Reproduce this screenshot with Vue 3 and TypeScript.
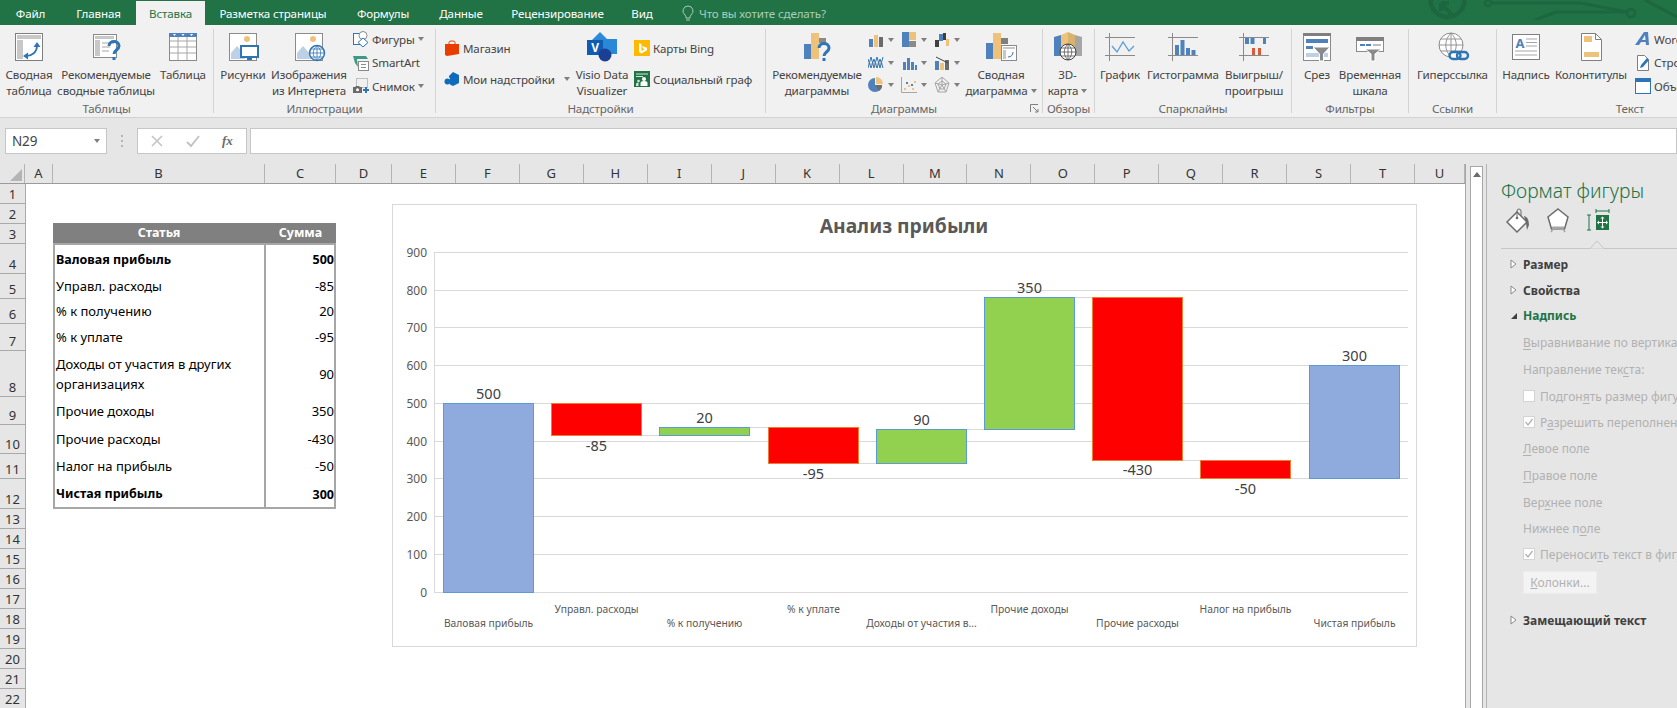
<script setup lang="ts">
type Big = { t: "big"; w: number; icon: string; lines: string[]; caret?: boolean };
type Small = { t: "small"; w: number; pad: number; two?: boolean; rows: { icon: string; text: string; caret?: boolean }[] };
type Mini = { t: "mini"; w: number; icons: string[] };
type Item = Big | Small | Mini;
type Group = { name: string; w: number; items: Item[]; launcher?: boolean };

const tabs = [
  { name: "Файл", w: 61 },
  { name: "Главная", w: 75 },
  { name: "Вставка", w: 69, active: true },
  { name: "Разметка страницы", w: 136 },
  { name: "Формулы", w: 84 },
  { name: "Данные", w: 72 },
  { name: "Рецензирование", w: 121 },
  { name: "Вид", w: 48 },
];

const grid = '<path d="M4 9h26M4 15h26M4 21h26M12 5v23M21 5v23" stroke="#a6a6a6" fill="none"/>';
const frame = '<path d="M2 5.5h30M2 23.5h30M6.5 1v28" stroke="#8a8a8a" fill="none"/>';
const landscape =
  '<rect x="3.5" y="1.5" width="27" height="27" fill="#fff" stroke="#8a8a8a"/><circle cx="21" cy="7" r="3" fill="#eec27a"/><path d="M5 27v-6l6-7 8 9v4z" fill="#bcd0e6"/>';
const funnel = '<path d="M13 15h17l-6.5 7v7h-4v-7z" fill="#8a8a8a" stroke="#fff"/>';

const icons: Record<string, string> = {
  pivot:
    '<rect x="3.5" y="1.5" width="27" height="27" fill="#fff" stroke="#7f7f7f"/><rect x="5" y="3" width="24" height="4" fill="#c8c8c8"/><rect x="5" y="8" width="6" height="19" fill="#c8c8c8"/><path d="M14 24c6 0 11-4 11-10" fill="none" stroke="#2e75b6" stroke-width="1.8"/><path d="M25 10l-3.5 5h7zM11 24l5-3.5v7z" fill="#2e75b6"/>',
  recpivot:
    '<rect x="4.5" y="2.5" width="23" height="23" fill="#fff" stroke="#8a8a8a"/><path d="M6 4h19v3H6zM6 8h5v16H6z" fill="#c8c8c8"/><path d="M13 11h12M13 15h8M13 19h7" stroke="#a6a6a6"/><path d="M20 14c0-6 10-6 10 0 0 4-5 4-5 8" fill="none" stroke="#2e75b6" stroke-width="3"/><rect x="23.5" y="25" width="3" height="3" fill="#2e75b6"/>',
  table:
    '<rect x="3.5" y="1.5" width="27" height="27" fill="#fff" stroke="#8a8a8a"/><rect x="3" y="1" width="28" height="4" fill="#4f81bd"/><path d="M7 2h3l-1.500 2zM15.500 2h3l-1.500 2zM24 2h3l-1.500 2z" fill="#fff"/>' + grid,
  pictures:
    landscape + '<rect x="15" y="14" width="17" height="11" fill="#fff" stroke="#2e75b6" stroke-width="2"/><path d="M21 26h5v2h-5z" fill="#2e75b6"/>',
  online:
    landscape + '<circle cx="25" cy="21" r="7.500" fill="#fff" stroke="#2e75b6" stroke-width="1.500"/><path d="M17.500 21h15M18.500 17h13M18.500 25h13M25 13.500v15M25 13.500c-5 5-5 10 0 15M25 13.500c5 5 5 10 0 15" fill="none" stroke="#2e75b6" stroke-width=".8"/>',
  visio:
    '<path d="M15 0l8 8h-16z" fill="#2e8ad8"/><rect x="11" y="7" width="21" height="15" fill="#2b88d8"/><rect x="2" y="8" width="16" height="15" fill="#0f5cb5"/><circle cx="20" cy="23" r="6.500" fill="#1a3f95"/><text x="10" y="20" font-size="12" font-weight="700" fill="#fff" text-anchor="middle" font-family="Noto Sans, sans-serif">V</text>',
  recchart:
    '<rect x="4" y="12" width="7" height="15" fill="#4f81bd"/><rect x="11" y="1" width="8" height="26" fill="#eec27a"/><rect x="19" y="6" width="7" height="5" fill="#8a8a8a"/><path d="M19 16c0-6 10-6 10 0 0 4-5 4-5 8" fill="none" stroke="#2e75b6" stroke-width="3"/><rect x="22.500" y="26" width="3" height="3" fill="#2e75b6"/>',
  pivotchart:
    '<rect x="2" y="11" width="7" height="16" fill="#4f81bd"/><rect x="9" y="1" width="8" height="26" fill="#eec27a"/><rect x="17" y="6" width="7" height="6" fill="#7f7f7f"/><rect x="17.500" y="13.500" width="15" height="15" fill="#fff" stroke="#8a8a8a"/><path d="M19 15h12v2H19zM19 18h3v9h-3z" fill="#c8c8c8"/><path d="M24 25c3 0 5-2 5-5" fill="none" stroke="#2e75b6"/>',
  map3d:
    '<path d="M3 5l7-2v21H3z" fill="#4f81bd"/><path d="M10 3l7-3 0 18H10z" fill="#eec27a"/><path d="M17 0l7 3v16h-7z" fill="#d8b36e"/><path d="M24 3l7 2v19h-7z" fill="#a6a6a6"/><circle cx="17" cy="20" r="8" fill="#fff" stroke="#404040"/><path d="M9 20h16M10 16h14M10 24h14M17 12v16M17 12c-5 5-5 11 0 16M17 12c5 5 5 11 0 16" fill="none" stroke="#404040" stroke-width=".7"/>',
  sparkline: frame + '<path d="M9 14l5 6 6-10 6 9 5-5" fill="none" stroke="#5b9bd5" stroke-width="1.300"/>',
  sparkcol: frame + '<path d="M9 13h4v10H9zM14.500 8h4v15h-4zM20 16h4v7h-4zM25.500 18h4v5h-4z" fill="#4f81bd"/>',
  sparkwin: frame + '<path d="M8 6h4v6H8zM13.500 6h4v6h-4zM26 6h3v6h-3z" fill="#4f81bd"/><path d="M15 16h3v7h-3zM21 16h3v7h-3z" fill="#d9593b"/>',
  slicer:
    '<rect x="3.500" y="1.500" width="27" height="27" fill="#fff" stroke="#8a8a8a"/><rect x="3" y="1" width="28" height="3" fill="#7f7f7f"/><path d="M6 7h22v4H6zM6 14h7v3H6z" fill="#4f81bd"/><rect x="6" y="21" width="22" height="4" fill="#bcd0e6"/>' + funnel,
  timeline:
    '<rect x="3.500" y="5.500" width="27" height="14" fill="#fff" stroke="#8a8a8a"/><rect x="3" y="5" width="28" height="4" fill="#7f7f7f"/><path d="M7 12h5v2H7zM13 12h5v2h-5z" fill="#4f81bd"/><path d="M20 12h8v2h-8z" fill="#bdbdbd"/><path d="M12 17h16l-6 5v7h-4v-7z" fill="#8a8a8a" stroke="#fff"/>',
  hyperlink:
    '<circle cx="15" cy="13" r="12" fill="#fff" stroke="#8a8a8a"/><path d="M3 13h24M5 7h20M5 19h20M15 1v24M15 1c-7 7-7 17 0 24M15 1c7 7 7 17 0 24" fill="none" stroke="#8a8a8a" stroke-width=".9"/><rect x="13.500" y="20" width="11" height="7" rx="3.500" fill="#fff" stroke="#2e75b6" stroke-width="2.400"/><rect x="21" y="20" width="11" height="7" rx="3.500" fill="none" stroke="#2e75b6" stroke-width="2.400"/>',
  textbox:
    '<rect x="3.500" y="2.500" width="27" height="25" fill="#fff" stroke="#7f7f7f"/><text x="11" y="16" font-size="13" font-weight="700" fill="#4f81bd" text-anchor="middle" font-family="Noto Sans, sans-serif">A</text><path d="M17 7h11M17 10.500h11M17 14h11M6 19h22M6 23h22" stroke="#a6a6a6"/>',
  header:
    '<path d="M7.500 1.500h14l6 6v21h-20z" fill="#fff" stroke="#7f7f7f"/><path d="M21.500 1.500v6h6" fill="none" stroke="#7f7f7f"/><rect x="10" y="4" width="8" height="6" fill="#eec27a"/><rect x="10" y="20" width="15" height="5" fill="#eec27a"/>',
  shapes:
    '<rect x=".5" y="2.500" width="11" height="11" fill="#fff" stroke="#2e75b6"/><circle cx="10" cy="4.500" r="4" fill="#fff" stroke="#8a8a8a"/><path d="M10 7l5 4.500-5 4.500-5-4.500z" fill="#fff" stroke="#2e75b6"/>',
  smartart:
    '<path d="M0 1h13l2 3H4l1 8-3-4z" fill="#3e9a86"/><rect x="5.500" y="6.500" width="10" height="9" fill="#fff" stroke="#8a8a8a"/><path d="M8 9.500h5M8 12.500h5" stroke="#8a8a8a"/>',
  screenshot:
    '<rect x="3.500" y=".5" width="11" height="9" fill="none" stroke="#8a8a8a" stroke-dasharray="1 1"/><path d="M0 9h2l1-1h3l1 1h2v6H0z" fill="#6b6b6b"/><circle cx="4.500" cy="11.800" r="1.500" fill="#fff"/><path d="M10 12h6M13 9v6" stroke="#2e75b6" stroke-width="2"/>',
  store:
    '<path d="M1 4h14v10l-12 2-2-1z" fill="#eb3c00"/><path d="M5 5V2.500Q5 1 7 1h2q2 0 2 1.500V5" fill="none" stroke="#eb3c00"/>',
  addins:
    '<path d="M9 1l6 3v8l-6 3-3-1.500V7L5 6.500V5z" fill="#0f6cbd"/><circle cx="3.500" cy="10.500" r="3" fill="#0f6cbd"/>',
  bing:
    '<rect width="16" height="16" fill="#ffb900"/><path d="M5 3l2.500 1v7l3-1.800-1.500-.7-1-2.500 5 1.800v2.400L7.500 13.500 5 12z" fill="#fff"/>',
  people:
    '<rect width="16" height="16" fill="#217346"/><path d="M2 3h12M2 5.500h7" stroke="#cfe5d8"/><circle cx="10" cy="8" r="2" fill="#fff"/><path d="M6.500 15v-3q0-2 3.500-2t3.500 2v3z" fill="#fff"/><circle cx="4.500" cy="10" r="1.300" fill="#cfe5d8"/><path d="M2 15v-2q0-1.500 2.500-1.500v3.500z" fill="#cfe5d8"/>',
  wordart:
    '<path d="M0 14L9 1h4l1 13h-3l-.300-3H6l-2 3zM7 9h3.500L10 4z" fill="#4f81bd"/>',
  signature:
    '<path d="M2.500 .5h7l4 4v11h-11z" fill="#fff" stroke="#7f7f7f"/><path d="M5 13l1-3 6-7 2 2-6 7z" fill="#2e75b6"/>',
  object:
    '<rect x=".5" y=".5" width="15" height="15" fill="#fff" stroke="#2e75b6"/><rect y="0" width="16" height="4" fill="#2e75b6"/>',
  mColumn: '<path d="M1 7h4v8H1z" fill="#4f81bd"/><path d="M6 3h4v12H6z" fill="#eec27a"/><path d="M11 5h4v10h-4z" fill="#6b6b6b"/>',
  mTree: '<path d="M1 0h7v15H1z" fill="#4f81bd"/><path d="M8 0h7v8H8z" fill="#eec27a"/><path d="M8 9h7v6H8z" fill="#8a8a8a"/>',
  mWater: '<path d="M1 8h4v7H1z" fill="#404040"/><path d="M5 2h4v7H5z" fill="#4f81bd"/><path d="M9 1h3v7H9z" fill="#404040"/><path d="M12 7h3v7h-3z" fill="#eec27a"/>',
  mLine: '<path d="M0 13l3-11 3 11 3-11 3 11 3-11M0 4l3 9 3-9 3 9 3-9 3 9" fill="none" stroke="#2e75b6"/><path d="M0 9h15" stroke="#8a8a8a"/>',
  mStat: '<path d="M2 7h3v8H2zM6 3h3v12H6zM10 7h3v8h-3zM14 10h2v5h-2z" fill="#4f81bd"/>',
  mCombo: '<path d="M1 6h4v9H1z" fill="#4f81bd"/><path d="M6 8h4v7H6z" fill="#eec27a"/><path d="M11 5h4v10h-4z" fill="#6b6b6b"/><path d="M2 2l6 3 6 3" fill="none" stroke="#404040"/>',
  mPie: '<path d="M7 1a7 7 0 1 0 7 7H7z" fill="#4f81bd"/><path d="M8 0v7h7a7 7 0 0 0-7-7z" fill="#eec27a"/><path d="M7 8h7a7 7 0 0 1-3 6z" fill="#6b6b6b"/>',
  mScatter: '<path d="M.5 0v15.500H16" fill="none" stroke="#a6a6a6"/><path d="M3 11h2v2H3zM7 8h2v2H7zM11 11h2v2h-2zM13 4h2v2h-2z" fill="#eec27a"/><path d="M5 5h2v2H5zM10 7h2v2h-2z" fill="#4f81bd"/>',
  mRadar: '<path d="M8 0l7 6-3 9H4L1 6z" fill="none" stroke="#a6a6a6"/><path d="M8 0v8M15 6L8 8M12 15L8 8M4 15l4-7M1 6l7 2M8 4l4 3-2 5H6L4 7z" fill="none" stroke="#a6a6a6"/>',
  bucket:
    '<path d="M2 14L12 4l10 10-10 10z" fill="#fff" stroke="#6b6b6b" stroke-width="1.500"/><path d="M12 10V3q0-2 2-2t2 2v5" fill="none" stroke="#6b6b6b"/><circle cx="12" cy="10" r="1.300" fill="#6b6b6b"/><path d="M19 8q5 1 5 9l-2 5-1-7z" fill="#6b6b6b"/>',
  pentagon:
    '<path d="M12 1l10 8-3.500 12h-13L2 9z" fill="#fff" stroke="#6b6b6b" stroke-width="1.500"/><path d="M5 24l2-3h10l2 3" fill="none" stroke="#a6a6a6" stroke-width="1.500"/><path d="M6 19.500h12" stroke="#a6a6a6" stroke-width="2"/>',
  size:
    '<rect x="9" y="7" width="13" height="15" fill="#217346"/><path d="M9 3h13M9 1v4M22 1v4M2 7v15M0 7h4M0 22h4" stroke="#217346" fill="none"/><path d="M15.500 9.500v10M11 14.500h9" stroke="#fff"/><path d="M15.500 8.500l-2 2h4zM15.500 20.500l-2-2h4zM10 14.500l2-2v4zM21 14.500l-2-2v4z" fill="#fff"/>',
};

const groups: Group[] = [
  {
    name: "Таблицы",
    w: 213,
    items: [
      { t: "big", w: 58, icon: "pivot", lines: ["Сводная", "таблица"] },
      { t: "big", w: 96, icon: "recpivot", lines: ["Рекомендуемые", "сводные таблицы"] },
      { t: "big", w: 58, icon: "table", lines: ["Таблица"] },
    ],
  },
  {
    name: "Иллюстрации",
    w: 221,
    items: [
      { t: "big", w: 58, icon: "pictures", lines: ["Рисунки"] },
      { t: "big", w: 74, icon: "online", lines: ["Изображения", "из Интернета"] },
      {
        t: "small",
        w: 89,
        pad: 7,
        rows: [
          { icon: "shapes", text: "Фигуры", caret: true },
          { icon: "smartart", text: "SmartArt" },
          { icon: "screenshot", text: "Снимок", caret: true },
        ],
      },
    ],
  },
  {
    name: "Надстройки",
    w: 329,
    items: [
      {
        t: "small",
        w: 136,
        pad: 8,
        two: true,
        rows: [
          { icon: "store", text: "Магазин" },
          { icon: "addins", text: "Мои надстройки", caret: true },
        ],
      },
      { t: "big", w: 60, icon: "visio", lines: ["Visio Data", "Visualizer"] },
      {
        t: "small",
        w: 133,
        pad: 2,
        two: true,
        rows: [
          { icon: "bing", text: "Карты Bing" },
          { icon: "people", text: "Социальный граф" },
        ],
      },
    ],
  },
  {
    name: "Диаграммы",
    w: 276,
    launcher: true,
    items: [
      { t: "big", w: 102, icon: "recchart", lines: ["Рекомендуемые", "диаграммы"] },
      { t: "mini", w: 93, icons: ["mColumn", "mTree", "mWater", "mLine", "mStat", "mCombo", "mPie", "mScatter", "mRadar"] },
      { t: "big", w: 80, icon: "pivotchart", lines: ["Сводная", "диаграмма"], caret: true },
    ],
  },
  { name: "Обзоры", w: 51, items: [{ t: "big", w: 49, icon: "map3d", lines: ["3D-", "карта"], caret: true }] },
  {
    name: "Спарклайны",
    w: 196,
    items: [
      { t: "big", w: 50, icon: "sparkline", lines: ["График"] },
      { t: "big", w: 76, icon: "sparkcol", lines: ["Гистограмма"] },
      { t: "big", w: 66, icon: "sparkwin", lines: ["Выигрыш/", "проигрыш"] },
    ],
  },
  {
    name: "Фильтры",
    w: 116,
    items: [
      { t: "big", w: 50, icon: "slicer", lines: ["Срез"] },
      { t: "big", w: 56, icon: "timeline", lines: ["Временная", "шкала"] },
    ],
  },
  { name: "Ссылки", w: 87, items: [{ t: "big", w: 87, icon: "hyperlink", lines: ["Гиперссылка"] }] },
  {
    name: "Текст",
    w: 266,
    items: [
      { t: "big", w: 58, icon: "textbox", lines: ["Надпись"] },
      { t: "big", w: 72, icon: "header", lines: ["Колонтитулы"] },
      {
        t: "small",
        w: 130,
        pad: 8,
        rows: [
          { icon: "wordart", text: "WordArt" },
          { icon: "signature", text: "Строка подписи" },
          { icon: "object", text: "Объект" },
        ],
      },
    ],
  },
];

const columns = [
  { n: "A", w: 28 },
  { n: "B", w: 212 },
  { n: "C", w: 71 },
  { n: "D", w: 56 },
  ..."EFGHIJKLMNOPQRST".split("").map((n) => ({ n, w: 63.94 })),
  { n: "U", w: 50 },
];

const rowHeights = [20, 20, 20, 30, 25, 25, 27, 46, 28, 29, 25, 30, 20, 20, 20, 20, 20, 20, 20, 20, 20, 20];

const tableRows = [
  { name: "Валовая прибыль", value: "500", h: 28, bold: true },
  { name: "Управл. расходы", value: "-85", h: 25 },
  { name: "% к получению", value: "20", h: 25 },
  { name: "% к уплате", value: "-95", h: 27 },
  { name: "Доходы от участия в других организациях", value: "90", h: 46 },
  { name: "Прочие доходы", value: "350", h: 28 },
  { name: "Прочие расходы", value: "-430", h: 29 },
  { name: "Налог на прибыль", value: "-50", h: 25 },
  { name: "Чистая прибыль", value: "300", h: 29, bold: true },
];

// chart geometry is in page pixels, the svg viewBox starts at the chart corner
const y0 = 592.3;
const perUnit = 0.3778;
const yOf = (v: number) => y0 - v * perUnit;
const ticks = [0, 100, 200, 300, 400, 500, 600, 700, 800, 900];
const crisp = (v: number) => Math.floor(v) + 0.5;

const bars = [
  { label: "Валовая прибыль", text: "500", lo: 0, hi: 500, kind: "total", ty: 394, row: 2 },
  { label: "Управл. расходы", text: "-85", lo: 415, hi: 500, kind: "down", ty: 446, row: 1 },
  { label: "% к получению", text: "20", lo: 415, hi: 435, kind: "up", ty: 418, row: 2 },
  { label: "% к уплате", text: "-95", lo: 340, hi: 435, kind: "down", ty: 474, row: 1 },
  { label: "Доходы от участия в...", text: "90", lo: 340, hi: 430, kind: "up", ty: 420, row: 2 },
  { label: "Прочие доходы", text: "350", lo: 430, hi: 780, kind: "up", ty: 288, row: 1 },
  { label: "Прочие расходы", text: "-430", lo: 350, hi: 780, kind: "down", ty: 470, row: 2 },
  { label: "Налог на прибыль", text: "-50", lo: 300, hi: 350, kind: "down", ty: 489, row: 1 },
  { label: "Чистая прибыль", text: "300", lo: 300, hi: 600, kind: "total", ty: 356, row: 2 },
].map((b, i) => {
  const x = Math.round(443 + 108.2 * i);
  const top = crisp(yOf(b.hi));
  const bottom = crisp(yOf(b.lo));
  return { ...b, x: x + 0.5, w: 90, cx: x + 45.5, top, h: bottom - top };
});

const levels = [500, 415, 435, 340, 430, 780, 350, 300];
const connectors = levels.map((v, i) => ({ x1: bars[i].x + 90, x2: bars[i + 1].x, y: crisp(yOf(v)) }));

const paneRows = [
  { kind: "section", text: "Размер", h: 26 },
  { kind: "section", text: "Свойства", h: 26 },
  { kind: "open", text: "Надпись", h: 25.5 },
  { kind: "label", pre: "", u: "В", post: "ыравнивание по вертикали:", h: 27 },
  { kind: "label", pre: "Направление тек", u: "с", post: "та:", h: 27.5 },
  { kind: "check", pre: "Подгон", u: "я", post: "ть размер фигуры под текст", h: 26 },
  { kind: "check", on: true, pre: "Р", u: "а", post: "зрешить переполнение фигуры текстом", h: 26 },
  { kind: "label", pre: "", u: "Л", post: "евое поле", h: 26.5 },
  { kind: "label", pre: "", u: "П", post: "равое поле", h: 27 },
  { kind: "label", pre: "Вер", u: "х", post: "нее поле", h: 27 },
  { kind: "label", pre: "Нижнее п", u: "о", post: "ле", h: 26 },
  { kind: "check", on: true, pre: "Переноси", u: "т", post: "ь текст в фигуре", h: 25 },
];
</script>

<template>
  <div class="app">
    <div class="tabbar">
      <div v-for="t in tabs" :key="t.name" class="tab" :class="{ active: t.active }" :style="{ width: t.w + 'px' }">{{ t.name }}</div>
      <div class="search">
        <svg width="12" height="17" viewBox="0 0 12 17"><path d="M6 1a5 5 0 0 0-3 9q1 1 1 3h4q0-2 1-3A5 5 0 0 0 6 1zM4 15h4" fill="none" stroke="#a9cdb9" /></svg>
        <span>Что вы хотите сделать?</span>
      </div>
      <svg class="deco" width="260" height="20" viewBox="0 0 260 20">
        <g fill="none" stroke="#1c6640" stroke-width="3">
          <circle cx="20.500" cy="0" r="17" stroke-width="4.500" />
          <path d="M14 3l11 12M14 3v8M14 3h8" stroke-width="4" />
          <circle cx="61" cy="3" r="3" stroke-width="2.500" />
          <path d="M64 3h90l46 9" />
          <path d="M108 20l21-8h68" />
          <circle cx="204" cy="13" r="4" stroke-width="2.500" />
          <path d="M218 0l32 17" />
        </g>
      </svg>
    </div>

    <div class="ribbon">
      <template v-for="g in groups" :key="g.name">
        <div class="group" :style="{ width: g.w + 'px' }">
          <div class="group-body">
            <template v-for="(it, i) in g.items" :key="i">
              <div v-if="it.t === 'big'" class="big" :style="{ width: it.w + 'px' }">
                <svg class="big-icon" width="34" height="30" viewBox="0 0 34 30" v-html="icons[it.icon]"></svg>
                <div v-for="(line, j) in it.lines" :key="j" class="big-line">
                  {{ line }}<i v-if="it.caret && j === it.lines.length - 1" class="caret"></i>
                </div>
              </div>
              <div v-else-if="it.t === 'small'" class="smalls" :class="{ two: it.two }" :style="{ width: it.w + 'px', paddingLeft: it.pad + 'px' }">
                <div v-for="r in it.rows" :key="r.text" class="small">
                  <svg width="16" height="16" viewBox="0 0 16 16" v-html="icons[r.icon]"></svg>
                  <span>{{ r.text }}</span>
                  <i v-if="r.caret" class="caret"></i>
                </div>
              </div>
              <div v-else class="minis" :style="{ width: it.w + 'px' }">
                <div v-for="m in it.icons" :key="m" class="mini">
                  <svg width="16" height="16" viewBox="0 0 16 16" v-html="icons[m]"></svg>
                  <i class="caret"></i>
                </div>
              </div>
            </template>
          </div>
          <div class="group-name">{{ g.name }}</div>
          <svg v-if="g.launcher" class="launcher" width="9" height="9" viewBox="0 0 9 9"><path d="M.5 8V.5H8M3 3l5 5M8 5v3H5" fill="none" stroke="#7f7f7f" /></svg>
        </div>
        <div class="sep"></div>
      </template>
    </div>

    <div class="formula">
      <div class="namebox">
        <span>N29</span>
        <i class="caret"></i>
      </div>
      <div class="dots"></div>
      <div class="fbox">
        <svg width="14" height="14" viewBox="0 0 14 14"><path d="M2 2l10 10M12 2L2 12" stroke="#c4c4c4" stroke-width="1.600" /></svg>
        <svg width="14" height="14" viewBox="0 0 14 14"><path d="M1 8l4 4 8-10" fill="none" stroke="#c4c4c4" stroke-width="2" /></svg>
        <span class="fx">fx</span>
      </div>
      <div class="finput"></div>
    </div>

    <div class="main">
      <div class="sheet">
        <div class="colheads">
          <div class="corner"><svg width="12" height="12" viewBox="0 0 12 12"><path d="M12 0v12H0z" fill="#b4b4b4" /></svg></div>
          <div v-for="c in columns" :key="c.n" class="colhead" :style="{ width: c.w + 'px' }">{{ c.n }}</div>
        </div>
        <div class="body">
          <div class="rowheads">
            <div v-for="(h, i) in rowHeights" :key="i" class="rowhead" :style="{ height: h + 'px' }">{{ i + 1 }}</div>
          </div>
          <div class="cells">
            <div class="tbl">
              <div class="tbl-head"><div>Статья</div><div>Сумма</div></div>
              <div class="tbl-body">
                <div v-for="r in tableRows" :key="r.name" class="tbl-row" :class="{ bold: r.bold }" :style="{ height: r.h + 'px' }">
                  <div class="tname">{{ r.name }}</div>
                  <div class="tval">{{ r.value }}</div>
                </div>
              </div>
            </div>

            <svg class="chart" width="1025" height="443" viewBox="392 204 1025 443">
              <rect x="392.5" y="204.5" width="1024" height="442" fill="#fff" stroke="#d9d9d9" />
              <text x="904" y="233" class="c-title" text-anchor="middle">Анализ прибыли</text>
              <g v-for="t in ticks" :key="t">
                <line x1="434" x2="1408" :y1="crisp(yOf(t))" :y2="crisp(yOf(t))" stroke="#d9d9d9" />
                <text x="427" :y="crisp(yOf(t)) + 4.500" class="c-axis" text-anchor="end">{{ t }}</text>
              </g>
              <line x1="434.5" x2="434.5" y1="252" y2="592" stroke="#d9d9d9" />
              <line v-for="(c, i) in connectors" :key="i" :x1="c.x1" :x2="c.x2" :y1="c.y" :y2="c.y" stroke="#d9d9d9" />
              <g v-for="b in bars" :key="b.label">
                <rect :x="b.x" :y="b.top" :width="b.w" :height="b.h" :class="b.kind" />
                <text :x="b.cx" :y="b.ty + 5" class="c-val" text-anchor="middle">{{ b.text }}</text>
                <text :x="b.cx" :y="b.row === 1 ? 613 : 627" class="c-cat" text-anchor="middle">{{ b.label }}</text>
              </g>
            </svg>
          </div>
        </div>
      </div>

      <div class="scroll">
        <div class="scroll-up"><i></i></div>
        <div class="scroll-track"></div>
      </div>

      <aside class="pane">
        <h2 class="pane-title">Формат фигуры</h2>
        <div class="pane-icons">
          <svg width="24" height="26" viewBox="0 0 24 26" v-html="icons.bucket"></svg>
          <svg width="24" height="26" viewBox="0 0 24 26" v-html="icons.pentagon"></svg>
          <svg width="24" height="26" viewBox="0 0 24 26" v-html="icons.size"></svg>
        </div>
        <div class="pane-rule">
          <svg class="notch" width="14" height="9" viewBox="0 0 14 9"><path d="M0 8.500L7 1l7 7.500" fill="#e6e6e6" stroke="#c6c6c6" /></svg>
        </div>
        <div class="pane-rows">
          <div v-for="r in paneRows" :key="r.text ?? r.post" class="prow" :class="r.kind" :style="{ height: r.h + 'px' }">
            <template v-if="r.kind === 'section' || r.kind === 'open'">
              <svg v-if="r.kind === 'section'" class="tri" width="7" height="10" viewBox="0 0 7 10"><path d="M1 1l5 4-5 4z" fill="#fff" stroke="#8a8a8a" /></svg>
              <svg v-else class="tri" width="7" height="10" viewBox="0 0 7 10"><path d="M1 8l6-6v6z" fill="#404040" /></svg>
              <b>{{ r.text }}</b>
            </template>
            <template v-else>
              <span v-if="r.kind === 'check'" class="box">
                <svg v-if="r.on" width="12" height="12" viewBox="0 0 12 12"><path d="M2.500 6l2.500 3 4.500-6" fill="none" stroke="#b1b1b1" stroke-width="1.300" /></svg>
              </span>
              <span class="nowrap">{{ r.pre }}<u>{{ r.u }}</u>{{ r.post }}</span>
            </template>
          </div>
          <div class="columns-btn"><u>К</u>олонки...</div>
          <div class="prow section last">
            <svg class="tri" width="7" height="10" viewBox="0 0 7 10"><path d="M1 1l5 4-5 4z" fill="#fff" stroke="#8a8a8a" /></svg>
            <b>Замещающий текст</b>
          </div>
        </div>
      </aside>
    </div>
  </div>
</template>

<style scoped>
.app{position:relative;width:1677px;height:708px;overflow:hidden;background:#e6e6e6;font-family:"Noto Sans",sans-serif;font-size:11.6px;letter-spacing:-.15px;color:#444}
.tabbar{position:relative;display:flex;height:25px;background:#217346;color:#fff;overflow:hidden}
.tab{display:flex;align-items:center;justify-content:center;height:25px;padding-top:2px;box-sizing:border-box;white-space:nowrap;flex:none}
.tab.active{background:#f1f1f1;color:#217346;margin-top:1px;height:24px;padding-top:1px}
.search{display:flex;align-items:center;gap:5px;margin-left:16px;padding-top:2px;color:#a9cdb9}
.deco{position:absolute;left:1427px;top:0}
.ribbon{display:flex;padding-top:4px;box-sizing:border-box;background:#f1f1f1;border-bottom:1px solid #d2d2d2;overflow:hidden;height:93px}
.group{position:relative;flex:none;height:88px}
.group-body{display:flex;height:73px}
.group-name{height:14px;line-height:14px;text-align:center;color:#666;white-space:nowrap}
.sep{flex:none;width:1px;height:84px;background:#d4d4d4}
.big{flex:none;display:flex;flex-direction:column;align-items:center;padding-top:3px;box-sizing:border-box}
.big-icon{flex:none;margin-bottom:5px}
.big-line{height:16px;line-height:16px;white-space:nowrap;display:flex;align-items:center;gap:3px}
.caret{display:inline-block;flex:none;width:0;height:0;border:3.5px solid transparent;border-top:4px solid #7f7f7f;border-bottom:0}
.smalls{flex:none;box-sizing:border-box;display:flex;flex-direction:column;gap:3.5px}
.smalls.two{padding-top:9px;gap:11px}
.small{display:flex;align-items:center;height:20px;gap:3px;white-space:nowrap}
.small svg{flex:none}
.smalls.two .caret{margin-left:6px}
.minis{flex:none;display:grid;grid-template-columns:repeat(3,33px);grid-auto-rows:20px;row-gap:2.5px;padding-top:1px;align-content:start}
.mini{display:flex;align-items:center;gap:4px}
.launcher{position:absolute;right:3px;bottom:4px}
.formula{display:flex;align-items:flex-start;height:46px;padding-top:10px;box-sizing:border-box;padding-left:5px}
.namebox{display:flex;align-items:center;justify-content:space-between;width:102px;height:26px;box-sizing:border-box;background:#fff;border:1px solid #c6c6c6;padding:0 6px 0 6px;font-size:13.5px}
.dots{width:2px;height:12px;margin:7px 14px 0 14px;background:repeating-linear-gradient(#b4b4b4 0 2px,transparent 2px 5px)}
.fbox{display:flex;align-items:center;width:110px;height:26px;box-sizing:border-box;background:#fff;border:1px solid #c6c6c6;padding-left:12px;gap:22px}
.fx{font-family:"Liberation Serif",serif;font-style:italic;font-weight:700;font-size:13px;color:#6b6b6b}
.finput{flex:1;height:26px;margin-left:3px;box-sizing:border-box;background:#fff;border:1px solid #c6c6c6}
.main{display:flex;height:544px}
.sheet{flex:none;width:1465px;display:flex;flex-direction:column}
.colheads{display:flex;height:20px;border-bottom:1px solid #9b9b9b;box-sizing:border-box;flex:none;letter-spacing:0}
.corner{flex:none;width:25px;box-sizing:border-box;border-right:1px solid #b4b4b4;display:flex;align-items:flex-end;justify-content:flex-end;padding:0 2px 2px 0}
.colhead{flex:none;box-sizing:border-box;border-right:1px solid #b4b4b4;text-align:center;line-height:19px;font-size:13px;color:#333}
.body{flex:1;display:flex;min-height:0}
.rowheads{flex:none;width:25px;letter-spacing:0}
.rowhead{box-sizing:border-box;border-bottom:1px solid #a9a9a9;text-align:center;font-size:13px;line-height:18px;color:#333;display:flex;align-items:flex-end;justify-content:center}
.cells{position:relative;flex:1;background:#fff;border-left:1px solid #a9a9a9;overflow:hidden}
.tbl{margin:39px 0 0 27px;width:283px;font-size:13px;letter-spacing:0;color:#000}
.tbl-head{display:grid;grid-template-columns:212px 71px;height:20px;background:#808080;color:#fff;font-weight:700;font-size:12.5px;text-align:center;line-height:20px}
.tbl-body{box-sizing:border-box;border:2px solid #a6a6a6}
.tbl-row{display:grid;grid-template-columns:209px 1fr;box-sizing:border-box}
.tbl-row.bold{font-weight:700;font-size:12.5px}
.tname{display:flex;align-items:center;padding:1px 8px 0 1px;line-height:20px}
.tval{display:flex;align-items:center;justify-content:flex-end;border-left:2px solid #a6a6a6;padding-top:1px}
.tbl-row:last-child .tname,.tbl-row:last-child .tval{padding-top:3px}
.chart{position:absolute;left:366px;top:20px;letter-spacing:0}
.c-title{font-size:19.3px;font-weight:700;fill:#595959}
.c-axis{font-size:12px;fill:#595959}
.c-val{font-size:14.5px;fill:#404040}
.c-cat{font-size:10.3px;fill:#595959}
.total{fill:#8faadc;stroke:#5b9bd5}
.down{fill:#f00;stroke:#ed7d31}
.up{fill:#92d050;stroke:#5b9bd5}
.scroll{flex:none;width:22px;display:flex;flex-direction:column;border-left:1px solid #a6a6a6;border-right:1px solid #b4b4b4;box-sizing:border-box;padding:2px 3px 0 4px}
.scroll-up{height:14px;background:#fff;border:1px solid #a6a6a6;border-bottom:0;display:flex;align-items:center;justify-content:center}
.scroll-up i{width:0;height:0;border:4.5px solid transparent;border-bottom:5px solid #6b6b6b;border-top:0}
.scroll-track{flex:1;background:#fff;border-left:1px solid #a6a6a6;border-right:1px solid #a6a6a6}
.pane{flex:1;min-width:0;padding:16px 0 0 14px;overflow:hidden;white-space:nowrap;font-size:12px;letter-spacing:0}
.pane-title{margin:0;font-size:19.3px;font-weight:300;line-height:22px;color:#217346}
.pane-icons{display:flex;gap:17px;margin:6px 0 0 4px;height:26px}
.pane-rule{position:relative;height:1px;margin-top:14px;background:#c6c6c6}
.notch{position:absolute;left:89px;top:-8px}
.pane-rows{padding-top:2px}
.prow{display:flex;align-items:center;padding-left:22px;color:#b1b1b1;box-sizing:border-box}
.prow u{text-underline-offset:2px}
.prow.section,.prow.open{padding-left:9px;gap:6px;color:#404040}
.prow.open{color:#217346}
.prow.last{height:26px;margin-top:13px}
.tri{flex:none}
.box{flex:none;width:12px;height:12px;box-sizing:border-box;background:#fff;border:1px solid #d4d4d4;margin-right:5px;display:flex}
.box svg{margin:-1px}
.columns-btn{width:74px;height:23px;margin:4.5px 0 0 22px;background:#f3f3f3;border:1px solid #ececec;box-sizing:border-box;color:#b1b1b1;text-align:center;line-height:21px}
.nowrap{white-space:nowrap}
</style>

<style>
html,body{margin:0;overflow:hidden}
</style>
